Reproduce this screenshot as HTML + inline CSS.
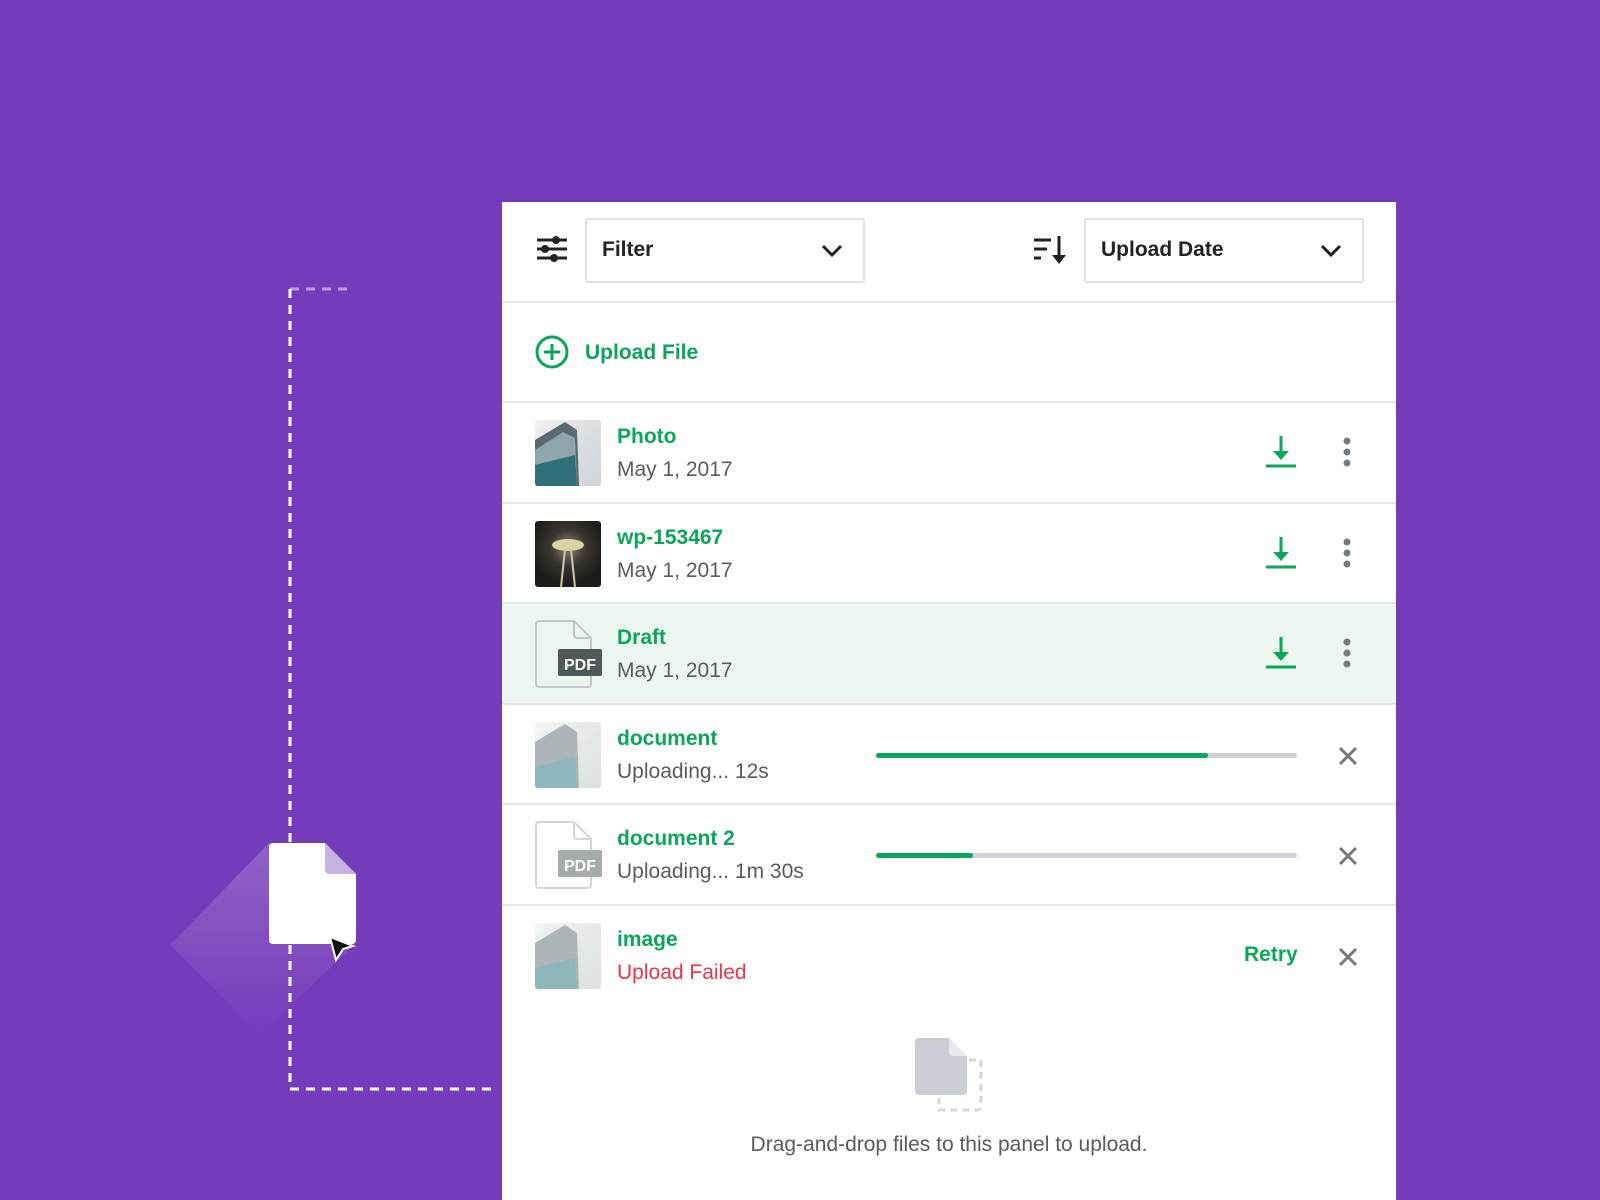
<!DOCTYPE html>
<html><head><style>
*{margin:0;padding:0;box-sizing:border-box}
body{width:1600px;height:1200px;background:#743bbb;position:relative;overflow:hidden;font-family:"Liberation Sans",sans-serif}
.panel{position:absolute;left:502px;top:202px;width:894px;height:998px;background:#fff}
.abs{position:absolute}
.sel{position:absolute;top:16px;height:65px;border:2px solid #dfe1e6;border-radius:3px;font-size:21px;font-weight:bold;color:#222;padding:18px 0 0 15px}
.hr{position:absolute;left:0;width:894px;height:2px;background:#e3e5ea}
.row{position:absolute;left:0;width:894px;height:101px}
.thumb{position:absolute;left:33px;top:17px;width:66px;height:66px;border-radius:3px;overflow:hidden}
.name{position:absolute;left:115px;top:22px;font-size:21px;font-weight:bold;color:#0ba659}
.sub{position:absolute;left:115px;top:55px;font-size:21px;color:#555d63}
.bar{position:absolute;left:374px;top:48px;width:421px;height:5px;border-radius:3px;background:#cfd3d9}
.bar i{display:block;height:5px;border-radius:3px;background:#0ba659}
.bld{background:linear-gradient(135deg,#f0f1f2 0%,#dfe2e4 40%,#cfd4d6 100%)}
</style></head><body>
<svg class="abs" style="left:0;top:0" width="600" height="1200">
<path d="M290 289 V1089 H494" fill="none" stroke="#fff" stroke-width="3" stroke-dasharray="9 7"/>
<path d="M290 289 H347" fill="none" stroke="#fff" stroke-opacity=".5" stroke-width="3" stroke-dasharray="9 7"/>
<defs><linearGradient id="sh" x1="0" y1="0" x2="0" y2="1"><stop offset="0" stop-color="#fff" stop-opacity=".2"/><stop offset="1" stop-color="#fff" stop-opacity="0"/></linearGradient></defs>
<polygon points="269,843 356,943 260,1035 170,945" fill="url(#sh)"/>
<path d="M273 843 H325 L356 874 V940 a4 4 0 0 1 -4 4 H273 a4 4 0 0 1 -4 -4 V847 a4 4 0 0 1 4 -4z" fill="#fff"/>
<path d="M325 843 L356 874 H329 a4 4 0 0 1 -4 -4z" fill="#c7b3e3"/>
<path d="M330 937 L353 946 L343 949 L336 960z" fill="#111" stroke="#fff" stroke-width="2"/>
</svg>
<div class="panel">
  <svg class="abs" style="left:34px;top:32px" width="32" height="32"><g stroke="#222" stroke-width="3"><line x1="1" y1="6" x2="31" y2="6"/><line x1="1" y1="15" x2="31" y2="15"/><line x1="1" y1="24" x2="31" y2="24"/></g><circle cx="20" cy="6" r="4" fill="#222"/><circle cx="9" cy="15" r="4" fill="#222"/><circle cx="18" cy="24" r="4" fill="#222"/></svg>
  <div class="sel" style="left:83px;width:280px">Filter<svg class="abs" style="right:20px;top:24px" width="22" height="14"><path d="M2 2 L11 11 L20 2" fill="none" stroke="#222" stroke-width="3"/></svg></div>
  <svg class="abs" style="left:532px;top:34px" width="34" height="30"><g stroke="#222" stroke-width="3"><line x1="0" y1="4" x2="17" y2="4"/><line x1="0" y1="13" x2="13" y2="13"/><line x1="0" y1="22" x2="7" y2="22"/><line x1="25" y1="0" x2="25" y2="26"/></g><path d="M18 19 L25 28 L32 19z" fill="#222"/></svg>
  <div class="sel" style="left:582px;width:280px">Upload Date<svg class="abs" style="right:20px;top:24px" width="22" height="14"><path d="M2 2 L11 11 L20 2" fill="none" stroke="#222" stroke-width="3"/></svg></div>
  <div class="hr" style="top:99px"></div>
  <svg class="abs" style="left:32px;top:132px" width="36" height="36"><circle cx="18" cy="18" r="15" fill="none" stroke="#0ba659" stroke-width="3"/><path d="M18 10 V26 M10 18 H26" stroke="#0ba659" stroke-width="3"/></svg>
  <div class="abs" style="left:83px;top:139px;font-size:21px;font-weight:bold;color:#0ba659">Upload File</div>
  <div class="hr" style="top:199px"></div>

  <div class="row" style="top:201px">
    <div class="thumb bld"><svg width="66" height="66"><path d="M0 20 L30 2 L42 10 L44 66 H0z" fill="#596a70"/><path d="M0 30 L28 12 L40 18 L42 66 H0z" fill="#8fa7ac"/><path d="M0 45 L40 35 L42 66 H0z" fill="#2f6f77"/></svg></div>
    <div class="name">Photo</div><div class="sub">May 1, 2017</div>
    <svg class="abs" style="left:764px;top:33px" width="30" height="32"><path d="M15 0 V22" stroke="#0ba659" stroke-width="3"/><path d="M7 15 L15 24 L23 15z" fill="#0ba659"/><line x1="0" y1="30" x2="30" y2="30" stroke="#0ba659" stroke-width="3"/></svg>
    <svg class="abs" style="left:839px;top:34px" width="12" height="34"><circle cx="6" cy="4" r="3.5" fill="#737b80"/><circle cx="6" cy="15" r="3.5" fill="#737b80"/><circle cx="6" cy="26" r="3.5" fill="#737b80"/></svg>
  </div>
  <div class="hr" style="top:300px"></div>

  <div class="row" style="top:302px">
    <div class="thumb" style="background:radial-gradient(circle at 50% 40%,#8a8570 0%,#3a3530 35%,#1e1d1b 70%)"><svg width="66" height="66"><ellipse cx="33" cy="24" rx="16" ry="6" fill="#d9d3a8"/><path d="M30 28 L26 66 M36 28 L40 66" stroke="#cfc9a8" stroke-width="2"/></svg></div>
    <div class="name">wp-153467</div><div class="sub">May 1, 2017</div>
    <svg class="abs" style="left:764px;top:33px" width="30" height="32"><path d="M15 0 V22" stroke="#0ba659" stroke-width="3"/><path d="M7 15 L15 24 L23 15z" fill="#0ba659"/><line x1="0" y1="30" x2="30" y2="30" stroke="#0ba659" stroke-width="3"/></svg>
    <svg class="abs" style="left:839px;top:34px" width="12" height="34"><circle cx="6" cy="4" r="3.5" fill="#737b80"/><circle cx="6" cy="15" r="3.5" fill="#737b80"/><circle cx="6" cy="26" r="3.5" fill="#737b80"/></svg>
  </div>
  <div class="hr" style="top:400px"></div>

  <div class="row" style="top:402px;background:#edf7f1">
    <svg class="abs" style="left:33px;top:16px" width="68" height="68"><path d="M4 1 H39 L56 18 V64 a3 3 0 0 1 -3 3 H4 a3 3 0 0 1 -3 -3 V4 a3 3 0 0 1 3 -3z M39 1 V15 a3 3 0 0 0 3 3 H56" fill="none" stroke="#c3c7cb" stroke-width="2"/><rect x="23" y="29" width="44" height="27" rx="2" fill="#4e5a5a"/><text x="45" y="50" text-anchor="middle" font-family="Liberation Sans" font-weight="bold" font-size="16" fill="#fff">PDF</text></svg>
    <div class="name">Draft</div><div class="sub">May 1, 2017</div>
    <svg class="abs" style="left:764px;top:33px" width="30" height="32"><path d="M15 0 V22" stroke="#0ba659" stroke-width="3"/><path d="M7 15 L15 24 L23 15z" fill="#0ba659"/><line x1="0" y1="30" x2="30" y2="30" stroke="#0ba659" stroke-width="3"/></svg>
    <svg class="abs" style="left:839px;top:34px" width="12" height="34"><circle cx="6" cy="4" r="3.5" fill="#737b80"/><circle cx="6" cy="15" r="3.5" fill="#737b80"/><circle cx="6" cy="26" r="3.5" fill="#737b80"/></svg>
  </div>
  <div class="hr" style="top:501px"></div>

  <div class="row" style="top:503px">
    <div class="thumb bld" style="opacity:.7"><svg width="66" height="66"><path d="M0 20 L30 2 L42 10 L44 66 H0z" fill="#8a979b"/><path d="M0 45 L40 35 L42 66 H0z" fill="#5f9aa0"/></svg></div>
    <div class="name">document</div><div class="sub">Uploading... 12s</div>
    <div class="bar"><i style="width:332px"></i></div>
    <svg class="abs" style="left:836px;top:41px" width="20" height="20"><path d="M2 2 L18 18 M18 2 L2 18" stroke="#737b80" stroke-width="3"/></svg>
  </div>
  <div class="hr" style="top:601px"></div>

  <div class="row" style="top:603px">
    <svg class="abs" style="left:33px;top:16px" width="68" height="68"><path d="M4 1 H39 L56 18 V64 a3 3 0 0 1 -3 3 H4 a3 3 0 0 1 -3 -3 V4 a3 3 0 0 1 3 -3z M39 1 V15 a3 3 0 0 0 3 3 H56" fill="none" stroke="#d3d6d9" stroke-width="2"/><rect x="23" y="29" width="44" height="27" rx="2" fill="#a6abad"/><text x="45" y="50" text-anchor="middle" font-family="Liberation Sans" font-weight="bold" font-size="16" fill="#fff">PDF</text></svg>
    <div class="name">document 2</div><div class="sub">Uploading... 1m 30s</div>
    <div class="bar"><i style="width:97px"></i></div>
    <svg class="abs" style="left:836px;top:41px" width="20" height="20"><path d="M2 2 L18 18 M18 2 L2 18" stroke="#737b80" stroke-width="3"/></svg>
  </div>
  <div class="hr" style="top:702px"></div>

  <div class="row" style="top:704px">
    <div class="thumb bld" style="opacity:.7"><svg width="66" height="66"><path d="M0 20 L30 2 L42 10 L44 66 H0z" fill="#8a979b"/><path d="M0 45 L40 35 L42 66 H0z" fill="#5f9aa0"/></svg></div>
    <div class="name">image</div><div class="sub" style="color:#e5374a">Upload Failed</div>
    <div class="abs" style="left:742px;top:37px;font-size:21px;font-weight:bold;color:#0ba659">Retry</div>
    <svg class="abs" style="left:836px;top:41px" width="20" height="20"><path d="M2 2 L18 18 M18 2 L2 18" stroke="#737b80" stroke-width="3"/></svg>
  </div>

  <svg class="abs" style="left:413px;top:834px" width="70" height="80"><path d="M42 24 H66 V70 a4 4 0 0 1 -4 4 H24 V50" fill="none" stroke="#d5d8de" stroke-width="3" stroke-dasharray="7 5"/><path d="M4 2 H34 L52 20 V55 a4 4 0 0 1 -4 4 H4 a4 4 0 0 1 -4 -4 V6 a4 4 0 0 1 4 -4z" fill="#cbcfd5"/><path d="M34 2 L52 20 H38 a4 4 0 0 1 -4 -4z" fill="#e8eaee"/></svg>
  <div class="abs" style="left:0;width:894px;top:931px;text-align:center;font-size:21px;color:#555d63">Drag-and-drop files to this panel to upload.</div>
</div>
</body></html>
